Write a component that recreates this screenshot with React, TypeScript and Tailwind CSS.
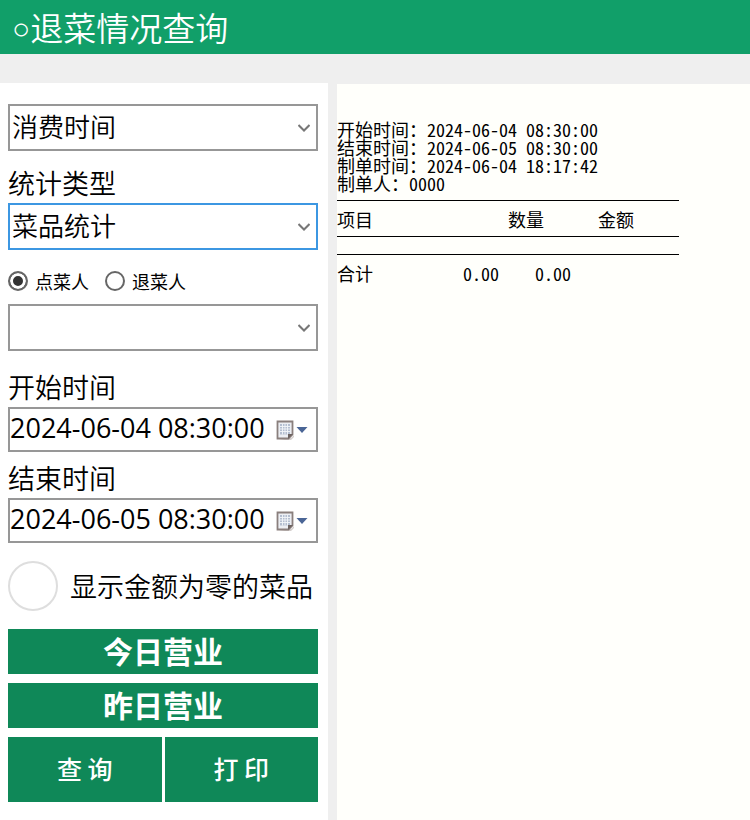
import { useState } from "react";

const fieldFont = "font-['Open_Sans','Noto_Sans_CJK_SC',sans-serif]";
// half-width digits, so that two of them fill one Chinese character on the slip
const halfWidth = "[font-feature-settings:'hwid']";

const statTypes = ["菜品统计", "分类统计"];
const timeTypes = ["消费时间", "退菜时间"];

const receiptHead = [
  { label: "开始时间：", value: "2024-06-04 08:30:00" },
  { label: "结束时间：", value: "2024-06-05 08:30:00" },
  { label: "制单时间：", value: "2024-06-04 18:17:42" },
  { label: "制单人：", value: "0000" },
];

function SelectBox({
  id,
  label,
  options,
  active = false,
}: {
  id: string;
  label: string;
  options: string[];
  active?: boolean;
}) {
  return (
    <div className="relative">
      <select
        id={id}
        aria-label={label}
        className={`block h-[47px] w-full appearance-none border-2 bg-white pb-1 pl-[2px] pr-8 text-[26px] font-[350] leading-9 text-black outline-none ${
          active ? "border-[#3c97e2]" : "border-[#979797]"
        }`}
      >
        {options.map((o) => (
          <option key={o}>{o}</option>
        ))}
      </select>
      <svg
        className="pointer-events-none absolute right-2 top-5 h-2 w-3"
        viewBox="0 0 12 8"
        fill="none"
        stroke="#777"
        strokeWidth="2"
      >
        <path d="M0.500 1L6 6.500L11.500 1" />
      </svg>
    </div>
  );
}

function DateBox({ id, value, onChange }: { id: string; value: string; onChange: (v: string) => void }) {
  return (
    <div className="flex h-[45px] items-center border-2 border-[#979797] bg-white pr-2">
      <input
        id={id}
        type="text"
        value={value}
        onChange={(e) => onChange(e.target.value)}
        className={`h-full min-w-0 flex-1 pb-1 text-[27px] leading-9 text-black outline-none ${fieldFont}`}
      />
      <button type="button" aria-label="选择日期" className="shrink-0">
        <svg className="h-6 w-8" viewBox="0 0 32 24">
          <path d="M2.500 22h12.500l3-3v-2l-3 3z" fill="#d5cfcd" />
          <path d="M1.500 3.500h15v13l-4 4h-11z" fill="#eceef3" stroke="#8a7f7d" strokeWidth="1.800" />
          <rect x="4" y="6" width="10" height="10.500" fill="#b4bed0" />
          <path d="M6.500 6v10.500M9 6v10.500M11.500 6v10.500M4 8.500h10M4 11h10M4 13.500h10" stroke="#f3f5f9" strokeWidth="0.900" />
          <path d="M17 16l-5 5v-5z" fill="#6e6462" />
          <path d="M20.500 9h11L26 15z" fill="#4a6596" />
        </svg>
      </button>
    </div>
  );
}

export default function App() {
  const [person, setPerson] = useState("order");
  const [start, setStart] = useState("2024-06-04 08:30:00");
  const [end, setEnd] = useState("2024-06-05 08:30:00");

  return (
    <div className="flex min-h-screen flex-col bg-[#efefef] font-['Noto_Sans_CJK_SC',sans-serif] text-black">
      <header className="flex h-[54px] items-center bg-[#119f69] pl-3 text-white">
        <h1 className="flex items-center text-[33px] font-[350] leading-10">
          <span className="pt-1 font-['DejaVu_Sans',sans-serif] text-[30px] font-light">○</span>
          退菜情况查询
        </h1>
      </header>

      <div className="mt-[29px] flex flex-1 gap-[9px]">
        <form className="w-[328px] shrink-0 bg-white pb-4 pl-2 pr-[10px] pt-[21px]" onSubmit={(e) => e.preventDefault()}>
          <SelectBox id="time-type" label="时间类型" options={timeTypes} />

          <label htmlFor="stat-type" className="mt-3 block text-[27px] font-[350] leading-10">
            统计类型
          </label>
          <SelectBox id="stat-type" label="统计类型" options={statTypes} active />

          <div className="flex h-[54px] items-center gap-4 pt-2 text-[18px] leading-6">
            {[
              { id: "order", text: "点菜人" },
              { id: "return", text: "退菜人" },
            ].map((r) => (
              <label key={r.id} className="flex items-center gap-[7px]">
                <input
                  type="radio"
                  name="person"
                  checked={person === r.id}
                  onChange={() => setPerson(r.id)}
                  className="size-5 appearance-none rounded-full border-2 border-[#666] bg-white checked:bg-[#333] checked:shadow-[inset_0_0_0_3px_white]"
                />
                {r.text}
              </label>
            ))}
          </div>
          <SelectBox id="person-name" label="人员" options={[""]} />

          <label htmlFor="start" className="mt-4 block text-[27px] font-[350] leading-10">
            开始时间
          </label>
          <DateBox id="start" value={start} onChange={setStart} />

          <label htmlFor="end" className="mt-[6px] block text-[27px] font-[350] leading-10">
            结束时间
          </label>
          <DateBox id="end" value={end} onChange={setEnd} />

          <label className="mt-[18px] flex items-center gap-3 whitespace-nowrap text-[27px] font-[350] leading-10">
            <input
              type="checkbox"
              className="size-[50px] shrink-0 appearance-none rounded-full border-2 border-[#dedede] bg-white checked:bg-[#0f8858]"
            />
            显示金额为零的菜品
          </label>

          <div className="mt-[18px] grid grid-cols-2 gap-x-[3px] gap-y-[9px] text-white">
            <button type="button" className="col-span-2 h-[45px] bg-[#0f8858] pb-1 text-[30px] font-bold leading-10">
              今日营业
            </button>
            <button type="button" className="col-span-2 h-[45px] bg-[#0f8858] pb-1 text-[30px] font-bold leading-10">
              昨日营业
            </button>
            <button type="submit" className="h-[65px] bg-[#0f8858] pb-1 text-[25px] font-medium leading-10">
              查 询
            </button>
            <button type="button" className="h-[65px] bg-[#0f8858] pb-1 text-[25px] font-medium leading-10">
              打 印
            </button>
          </div>
        </form>

        <main className="mt-px min-w-0 flex-1 bg-[#fffffb] pt-9 text-[18px] leading-[18px]">
          {receiptHead.map((row) => (
            <p key={row.label} className="flex h-[18px] items-center whitespace-nowrap">
              {row.label}
              <span className={halfWidth}>{row.value}</span>
            </p>
          ))}

          <table className="mt-2 w-[342px] table-fixed border-collapse text-left">
            <colgroup>
              <col className="w-[126px]" />
              <col className="w-[72px]" />
              <col className="w-[18px]" />
              <col className="w-[126px]" />
            </colgroup>
            <thead>
              <tr className="h-9 border-y border-black">
                <th className="font-normal">项目</th>
                <th colSpan={2} className="pl-[45px] font-normal">
                  数量
                </th>
                <th className="pl-[45px] font-normal">金额</th>
              </tr>
            </thead>
            <tbody>
              <tr className="h-[18px] border-b border-black">
                <td colSpan={4} />
              </tr>
            </tbody>
            <tfoot>
              <tr className="h-9">
                <td>合计</td>
                <td className={halfWidth}>0.00</td>
                <td colSpan={2} className={halfWidth}>
                  0.00
                </td>
              </tr>
            </tfoot>
          </table>
        </main>
      </div>
    </div>
  );
}
